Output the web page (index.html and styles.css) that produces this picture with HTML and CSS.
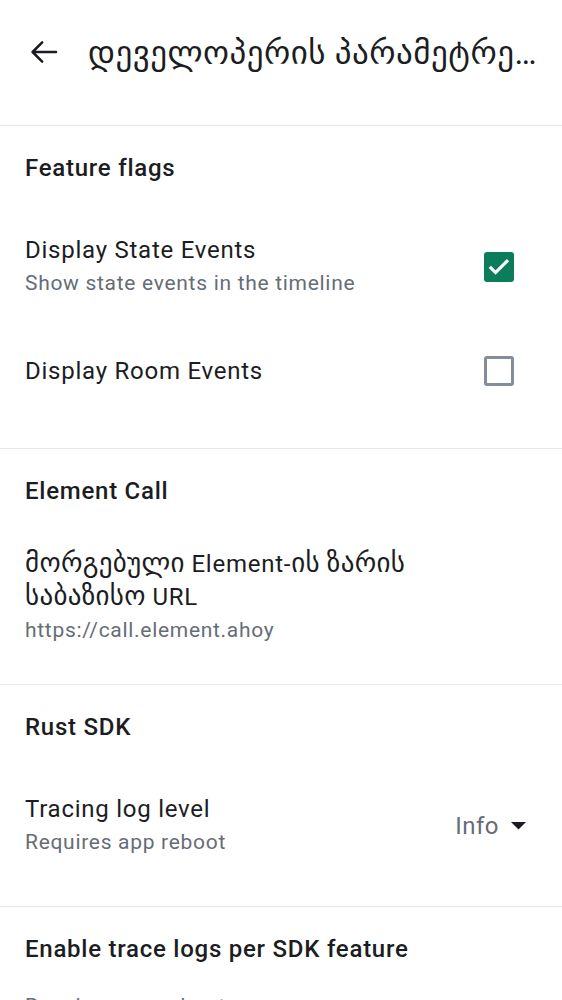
FILE: index.html
```html
<!DOCTYPE html>
<html lang="ka">
<head>
<meta charset="utf-8">
<title>დეველოპერის პარამეტრები</title>
<link rel="stylesheet" href="styles.css">
</head>
<body>
<header class="topbar">
  <button class="back" aria-label="Back">
    <svg viewBox="0 0 24 24" width="36" height="36"><path d="M20 12H4.6M10.8 5.6L4.4 12l6.4 6.4" fill="none" stroke="#1b1d22" stroke-width="1.7" stroke-linecap="round" stroke-linejoin="round"/></svg>
  </button>
  <h1 class="title">დეველოპერის პარამეტრები</h1>
</header>
<main class="list">
  <section class="section first">
    <h2 class="section-title">Feature flags</h2>
    <div class="item">
      <div class="text">
        <div class="item-title">Display State Events</div>
        <div class="item-sub">Show state events in the timeline</div>
      </div>
      <span class="control"><span class="checkbox checked"><svg viewBox="0 0 30 30" width="30" height="30"><polyline points="5.8,14.8 11.6,20.6 24,8.2" fill="none" stroke="#fff" stroke-width="3.2"/></svg></span></span>
    </div>
    <div class="item">
      <div class="text">
        <div class="item-title">Display Room Events</div>
      </div>
      <span class="control"><span class="checkbox"></span></span>
    </div>
  </section>
  <section class="section">
    <h2 class="section-title">Element Call</h2>
    <div class="item item-text">
      <div class="text">
        <div class="item-title wrap"><span class="geo">მორგებული</span> Element-<span class="geo">ის ზარის საბაზისო</span> URL</div>
        <div class="item-sub">https://call.element.ahoy</div>
      </div>
    </div>
  </section>
  <section class="section">
    <h2 class="section-title">Rust SDK</h2>
    <div class="item item-dropdown">
      <div class="text">
        <div class="item-title">Tracing log level</div>
        <div class="item-sub">Requires app reboot</div>
      </div>
      <span class="dropdown">Info<svg viewBox="0 0 15 8" width="15" height="8"><path d="M0 0h15L7.5 7.5z" fill="#1b1d22"/></svg></span>
    </div>
  </section>
  <section class="section">
    <h2 class="section-title tight">Enable trace logs per SDK feature</h2>
    <div class="note">Requires app reboot</div>
  </section>
</main>
</body>
</html>
```
FILE: styles.css
```css
html, body {
  margin: 0;
  padding: 0;
  background: #ffffff;
}
body {
  font-family: Roboto, "DejaVu Sans", sans-serif;
  color: #1b1d22;
  width: 562px;
  height: 1000px;
  overflow: hidden;
}
.topbar {
  display: flex;
  align-items: center;
  height: 104px;
  padding-left: 26px;
}
.back {
  width: 36px;
  height: 36px;
  padding: 0;
  border: 0;
  background: none;
  margin-right: 26px;
  display: flex;
}
.title {
  margin: 0;
  flex: 1;
  min-width: 0;
  font-size: 33px;
  font-weight: 400;
  letter-spacing: 0.5px;
  white-space: nowrap;
  overflow: hidden;
  text-overflow: ellipsis;
  padding-right: 18px;
  color: #1b1d22;
}
.section {
  border-top: 1px solid #e6e7ee;
  padding-bottom: 25px;
}
.section.first {
  margin-top: 21px;
}
.section-title {
  margin: 0;
  padding: 26px 25px 30px;
  font-size: 24px;
  line-height: 33px;
  font-weight: 500;
  letter-spacing: 0.75px;
  color: #1b1d22;
}
.section-title.tight {
  padding-bottom: 25px;
}
.item {
  display: flex;
  align-items: center;
  padding: 16px 27px 16px 25px;
}
.item-text {
  padding-top: 10px;
  padding-bottom: 12px;
}
.item-dropdown {
  padding-bottom: 19px;
}
.text {
  flex: 1;
  min-width: 0;
}
.item-title {
  font-size: 24px;
  line-height: 33px;
  letter-spacing: 0.75px;
  color: #1b1d22;
}
.item-title.wrap {
  max-width: 450px;
}
.geo {
  font-size: 27px;
  line-height: 16px;
  letter-spacing: 0.3px;
}
.item-sub {
  font-size: 21px;
  line-height: 33px;
  letter-spacing: 0.7px;
  color: #656d77;
}
.control {
  width: 72px;
  height: 72px;
  display: flex;
  align-items: center;
  justify-content: center;
}
.checkbox {
  width: 30px;
  height: 30px;
  box-sizing: border-box;
  border: 3px solid #848d98;
  border-radius: 3px;
  display: block;
}
.checkbox.checked {
  border: 0;
  background: #0b7d5b;
}
.checkbox svg {
  display: block;
}
.dropdown {
  height: 72px;
  display: flex;
  align-items: center;
  gap: 12px;
  padding-right: 9px;
  font-size: 24px;
  letter-spacing: 0.5px;
  color: #656d77;
}
.note {
  padding: 0 25px;
  font-size: 21px;
  line-height: 30px;
  letter-spacing: 0.7px;
  color: #656d77;
}
```
